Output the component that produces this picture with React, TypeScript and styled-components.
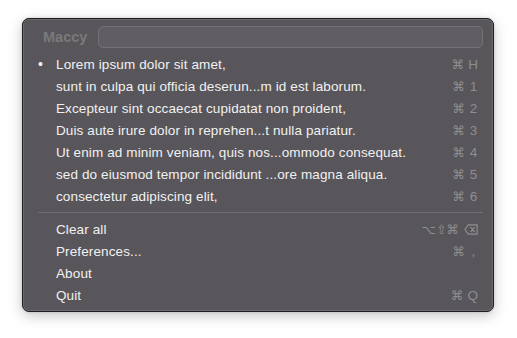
import React from 'react';
import styled, { createGlobalStyle } from 'styled-components';

const GlobalStyle = createGlobalStyle`
  html, body {
    margin: 0;
    padding: 0;
    background: #ffffff;
  }
  body {
    font-family: "Liberation Sans", Arial, sans-serif;
    -webkit-font-smoothing: antialiased;
  }
`;

const history = [
  { text: 'Lorem ipsum dolor sit amet,', key: 'H', active: true },
  { text: 'sunt in culpa qui officia deserun...m id est laborum.', key: '1' },
  { text: 'Excepteur sint occaecat cupidatat non proident,', key: '2' },
  { text: 'Duis aute irure dolor in reprehen...t nulla pariatur.', key: '3' },
  { text: 'Ut enim ad minim veniam, quis nos...ommodo consequat.', key: '4' },
  { text: 'sed do eiusmod tempor incididunt ...ore magna aliqua.', key: '5' },
  { text: 'consectetur adipiscing elit,', key: '6' },
];

const DeleteKey = () => (
  <svg width="14" height="11" viewBox="0 0 14 11" style={{ marginLeft: 1 }}>
    <path d="M4.3 0.8 H13.2 V10.2 H4.3 L0.8 5.5 Z" fill="none" stroke="currentColor" strokeWidth="1.2" strokeLinejoin="round" />
    <path d="M6.8 3.4 L10.4 7.6 M10.4 3.4 L6.8 7.6" stroke="currentColor" strokeWidth="1.2" strokeLinecap="round" />
  </svg>
);

const App = () => {
  return (
    <Page>
      <GlobalStyle />
      <Menu>
        <Header>
          <AppName>Maccy</AppName>
          <SearchField />
        </Header>

        {history.map((item) => (
          <Row key={item.key}>
            <Bullet>{item.active ? '•' : ''}</Bullet>
            <Label>{item.text}</Label>
            <Shortcut>
              <Cmd>⌘</Cmd>
              <KeyChar>{item.key}</KeyChar>
            </Shortcut>
          </Row>
        ))}

        <Separator />

        <Row>
          <Bullet />
          <Label>Clear all</Label>
          <Shortcut>
            <Cmd>⌥⇧⌘</Cmd>
            <DeleteKey />
          </Shortcut>
        </Row>
        <Row>
          <Bullet />
          <Label>Preferences...</Label>
          <Shortcut>
            <Cmd>⌘</Cmd>
            <KeyChar>,</KeyChar>
          </Shortcut>
        </Row>
        <Row>
          <Bullet />
          <Label>About</Label>
        </Row>
        <Row>
          <Bullet />
          <Label>Quit</Label>
          <Shortcut>
            <Cmd>⌘</Cmd>
            <KeyChar>Q</KeyChar>
          </Shortcut>
        </Row>
      </Menu>
    </Page>
  );
};

const Page = styled.div`
  width: 517px;
  height: 338px;
  padding: 18px 0 0 22px;
  box-sizing: border-box;
`;

const Menu = styled.div`
  width: 472px;
  height: 294px;
  box-sizing: border-box;
  background: #58565a;
  border: 1px solid #1f1e20;
  border-radius: 7px;
  box-shadow: inset 0 0 0 1px #6c6a6e, 0 4px 14px rgba(0, 0, 0, 0.22), 0 0 3px rgba(0, 0, 0, 0.15);
  padding: 7px 10px 5px 6px;
  display: flex;
  flex-direction: column;
`;

const Header = styled.div`
  display: flex;
  align-items: center;
  height: 22px;
  margin-bottom: 5px;
  padding-left: 14px;
`;

const AppName = styled.div`
  width: 55px;
  font-size: 14.5px;
  font-weight: bold;
  color: #7b797c;
`;

const SearchField = styled.div`
  flex: 1;
  height: 22px;
  box-sizing: border-box;
  background: #605e62;
  border: 1px solid #747276;
  border-radius: 5px;
`;

const Row = styled.div`
  display: flex;
  align-items: center;
  height: 22px;
  color: #f2f1f2;
  font-size: 13.5px;
  letter-spacing: 0.12px;
`;

const Bullet = styled.div`
  width: 27px;
  padding-right: 4px;
  box-sizing: border-box;
  text-align: center;
  font-size: 14px;
  color: #f2f1f2;
`;

const Label = styled.div`
  flex: 1;
  white-space: nowrap;
  overflow: hidden;
`;

const Shortcut = styled.div`
  display: flex;
  align-items: center;
  justify-content: flex-end;
  color: #8f8d91;
  font-size: 13.5px;
  padding-right: 5px;
`;

const Cmd = styled.span`
  font-family: "DejaVu Sans", sans-serif;
  font-size: 12.5px;
  margin-right: 4px;
  letter-spacing: 0;
`;

const KeyChar = styled.span`
  min-width: 9px;
  text-align: center;
`;

const Separator = styled.div`
  height: 1px;
  background: #6f6d71;
  margin: 5px 0 5px 9px;
`;

export default App;
